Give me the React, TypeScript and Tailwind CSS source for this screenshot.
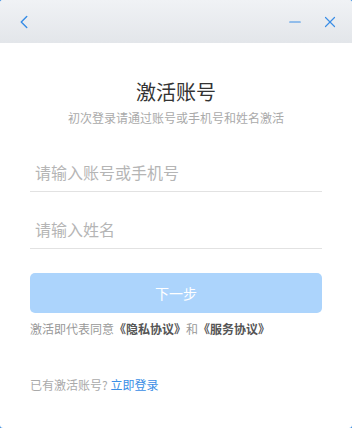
import { ChevronLeft, Minus, X } from 'lucide-react';

export default function App() {
  return (
    <div className="w-[352px] h-[428px] bg-[#3d8fe0]" style={{ fontFamily: '"Noto Sans CJK SC", "Noto Sans", sans-serif' }}>
      <div className="w-full h-full bg-white rounded-[3px] overflow-hidden flex flex-col">
        <div className="h-[43px] shrink-0 bg-gradient-to-b from-[#f0f2f5] to-[#e3e6ea] flex items-center px-[13px] text-[#3a8ee6]">
          <ChevronLeft size={22} strokeWidth={1.6} />
          <div className="flex-1" />
          <Minus size={18} strokeWidth={1.6} className="mr-[17px]" />
          <X size={18} strokeWidth={1.6} />
        </div>
        <div className="px-[30px] flex flex-col">
          <h1 className="text-center text-[20px] leading-[28px] text-[#333] mt-[35px]">激活账号</h1>
          <p className="text-center text-[12px] leading-[18px] text-[#aaa] mt-[3px]">初次登录请通过账号或手机号和姓名激活</p>
          <div className="mt-[25px] h-[40px] border-b border-[#e2e2e2] flex items-center px-[5px]">
            <input className="w-full outline-none text-[16px] text-[#333] placeholder:text-[#b5b5b5] bg-transparent" placeholder="请输入账号或手机号" />
          </div>
          <div className="mt-[17px] h-[40px] border-b border-[#e2e2e2] flex items-center px-[5px]">
            <input className="w-full outline-none text-[16px] text-[#333] placeholder:text-[#b5b5b5] bg-transparent" placeholder="请输入姓名" />
          </div>
          <button className="mt-[24px] h-[40px] rounded-[5px] bg-[#acd4fc] text-white text-[14px]">下一步</button>
          <p className="mt-[7px] text-[12px] leading-[18px] text-[#999]">
            激活即代表同意<span className="font-bold text-[#555]">《隐私协议》</span>和<span className="font-bold text-[#555]">《服务协议》</span>
          </p>
          <p className="mt-[38px] text-[12px] leading-[18px] text-[#aaa]">
            已有激活账号? <span className="text-[#3a8ee6]">立即登录</span>
          </p>
        </div>
      </div>
    </div>
  );
}
